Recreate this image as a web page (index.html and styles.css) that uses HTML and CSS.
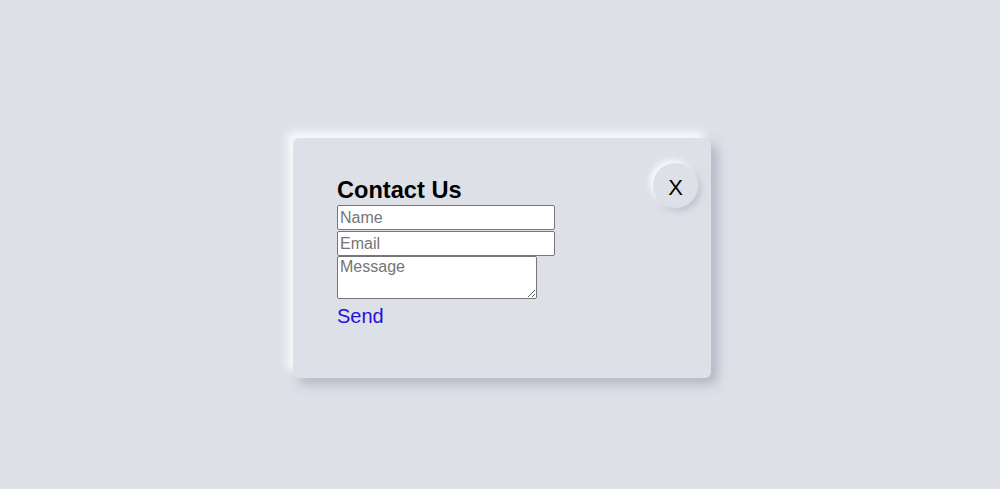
FILE: index.html
```html
<!DOCTYPE html>
<html lang="en">
<head>
    <meta charset="UTF-8">
    <meta name="viewport" content="width=device-width, initial-scale=1.0">
    <title>Contact Us</title>
    <link rel="stylesheet" href="styles.css">
</head>
<body>
    <div class="page">
        <div class="card">
            <button class="close-btn" type="button">X</button>
            <form class="contact-form">
                <h2>Contact Us</h2>
                <input type="text" class="field" placeholder="Name">
                <input type="email" class="field" placeholder="Email">
                <textarea class="message" placeholder="Message"></textarea>
                <a href="#" class="send">Send</a>
            </form>
        </div>
    </div>
</body>
</html>
```

FILE: styles.css
```css
:root {
    --bg: #dde0e7;
    --ink: #000;
    --link: #2a0fd4;
}

body {
    margin: 0;
    padding: 0;
    background: var(--bg);
    font-family: 'Liberation Sans', Arial, sans-serif;
}

.page {
    display: flex;
    justify-content: center;
    align-items: center;
    height: 489px;
}

.card {
    position: relative;
    width: 418px;
    height: 240px;
    box-sizing: border-box;
    padding: 38px 44px;
    margin-top: 27px;
    margin-left: 4px;
    background: var(--bg);
    border-radius: 6px;
    box-shadow: -6px -6px 10px rgba(255, 255, 255, 0.85),
                6px 6px 12px rgba(160, 165, 180, 0.75);
}

.contact-form {
    display: flex;
    flex-direction: column;
    align-items: flex-start;
}

.contact-form h2 {
    margin: 0;
    font-size: 23.6px;
    line-height: 28px;
    color: var(--ink);
}

.field,
.message {
    font-family: 'Liberation Sans', Arial, sans-serif;
    font-size: 16px;
    border: 1px solid #767676;
    border-radius: 2px;
    padding: 1px 2px;
    background: #fff;
    box-sizing: border-box;
}

.field {
    width: 218px;
    height: 25px;
    margin-top: 1px;
}

.field::placeholder,
.message::placeholder {
    color: #757575;
}

.message {
    width: 200px;
    height: 43px;
    margin-top: 0;
    resize: both;
}

.send {
    margin-top: 6px;
    font-size: 20px;
    line-height: 23px;
    color: var(--link);
    text-decoration: none;
}

.close-btn {
    position: absolute;
    top: 25px;
    right: 13px;
    width: 45px;
    height: 45px;
    padding: 5px 0 0;
    border: none;
    border-radius: 50%;
    background: var(--bg);
    font-family: 'Liberation Sans', Arial, sans-serif;
    font-size: 22px;
    color: var(--ink);
    box-shadow: -3px -3px 6px rgba(255, 255, 255, 0.9),
                3px 3px 6px rgba(170, 175, 190, 0.6);
    cursor: pointer;
}
```
